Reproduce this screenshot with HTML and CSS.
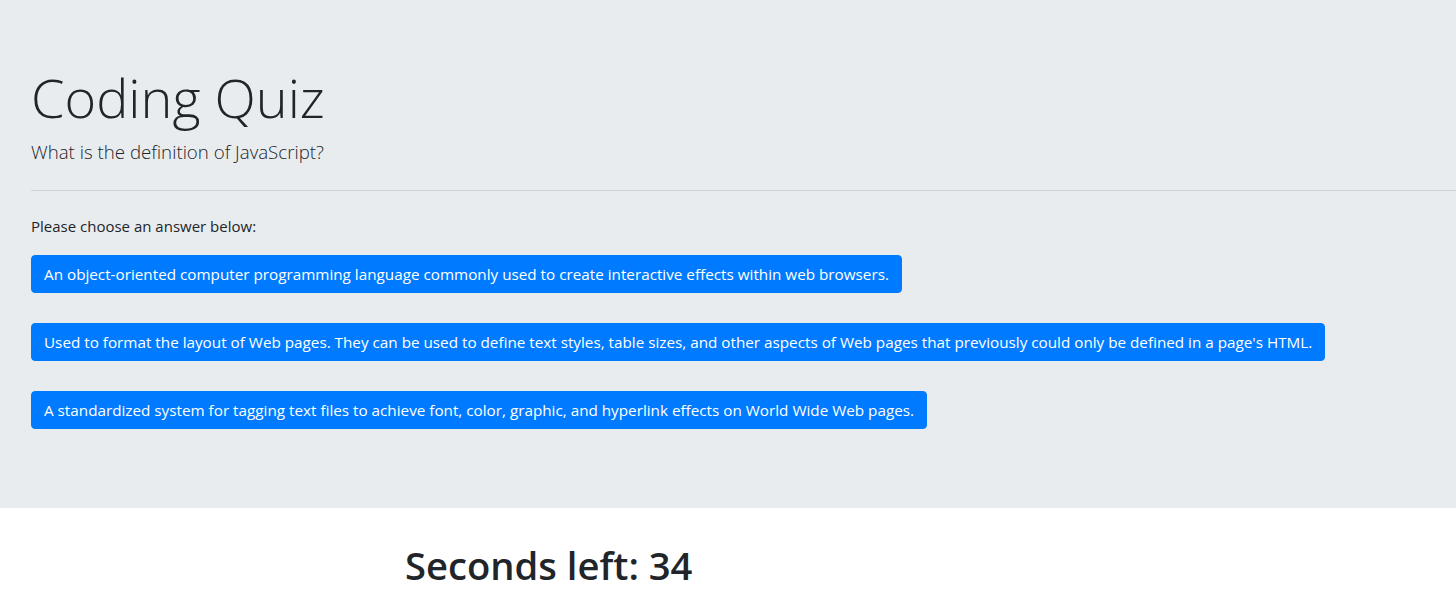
FILE: index.html
```html
<!DOCTYPE html>
<html lang="en">
<head>
<meta charset="utf-8">
<title>Coding Quiz</title>
<link rel="stylesheet" href="styles.css">
</head>
<body>
<div class="jumbotron">
  <h1 class="display">Coding Quiz</h1>
  <p class="lead">What is the definition of JavaScript?</p>
  <hr class="divider">
  <p class="prompt">Please choose an answer below:</p>
  <div class="answers">
    <button class="btn">An object-oriented computer programming language commonly used to create interactive effects within web browsers.</button>
    <button class="btn">Used to format the layout of Web pages. They can be used to define text styles, table sizes, and other aspects of Web pages that previously could only be defined in a page's HTML.</button>
    <button class="btn">A standardized system for tagging text files to achieve font, color, graphic, and hyperlink effects on World Wide Web pages.</button>
  </div>
</div>
<div class="timer">
  <h1 class="seconds">Seconds left: 34</h1>
</div>
</body>
</html>
```
FILE: styles.css
```css
* { box-sizing: border-box; }
body {
  margin: 0;
  font-family: "Open Sans", "Noto Sans", sans-serif;
  font-size: 16px;
  line-height: 1.5;
  color: #212529;
  background: #fff;
}
.jumbotron {
  background: #e9ecef;
  padding: 64px 0 64px 31px;
  margin-bottom: 32px;
}
.display {
  margin: 0 0 8px;
  font-size: 54px;
  font-weight: 300;
  line-height: 66px;
}
.lead {
  margin: 0;
  font-size: 18.7px;
  font-weight: 300;
  line-height: 28px;
}
.divider {
  margin: 24px 0 24px;
  border: 0;
  border-top: 1px solid rgba(0,0,0,.1);
}
.prompt {
  margin: 0 0 17px;
  font-size: 15px;
}
.answers {
  display: flex;
  flex-direction: column;
  align-items: flex-start;
  gap: 30px;
  padding-bottom: 15px;
}
.btn {
  font-family: inherit;
  font-size: 15.25px;
  line-height: 24px;
  color: #fff;
  background: #007bff;
  border: 1px solid #007bff;
  border-radius: 4px;
  padding: 6px 12px;
  text-align: center;
  cursor: pointer;
}
.timer {
  padding: 3px 0 0 405px;
}
.seconds {
  margin: 0;
  font-size: 38.2px;
  font-weight: 600;
  line-height: 1.2;
}
```
